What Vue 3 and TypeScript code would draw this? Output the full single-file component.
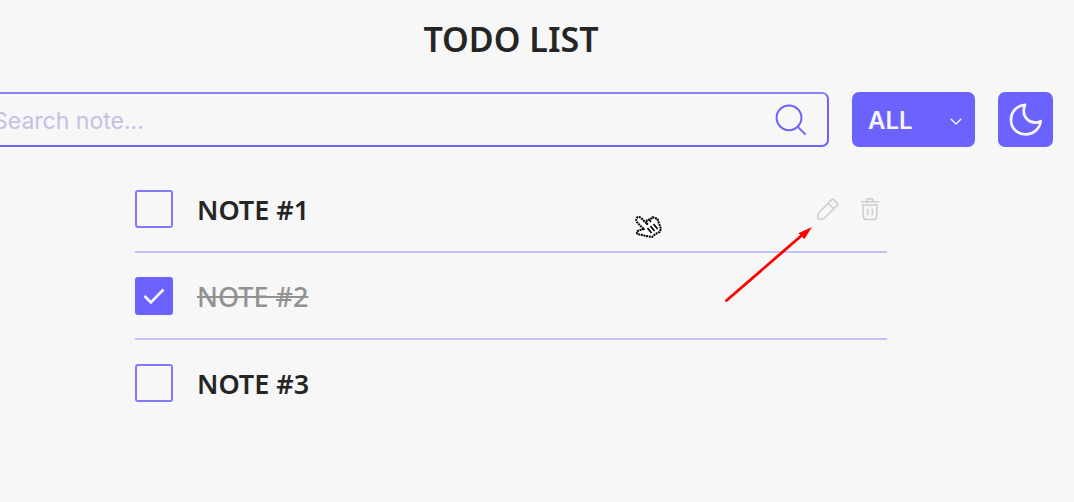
<script setup lang="ts">
import { computed, ref } from 'vue'

interface Note {
  id: number
  title: string
  done: boolean
}

const query = ref('')
const filter = ref('ALL')
const hovered = ref(1)
const notes = ref<Note[]>([
  { id: 1, title: 'NOTE #1', done: false },
  { id: 2, title: 'NOTE #2', done: true },
  { id: 3, title: 'NOTE #3', done: false },
])

const visibleNotes = computed(() =>
  notes.value.filter((note) => {
    const matches = note.title.toLowerCase().includes(query.value.toLowerCase())
    if (filter.value === 'COMPLETE') return matches && note.done
    if (filter.value === 'INCOMPLETE') return matches && !note.done
    return matches
  }),
)

function remove(id: number) {
  notes.value = notes.value.filter((note) => note.id !== id)
}
</script>

<template>
  <main class="page">
    <h1 class="title">TODO LIST</h1>

    <div class="toolbar">
      <div class="search">
        <input v-model="query" class="search-input" type="text" placeholder="Search note..." aria-label="Search note" />
        <button class="search-button" type="button" aria-label="Search">
          <svg width="32" height="32" viewBox="0 0 32 32" fill="none" stroke="currentColor" stroke-width="2">
            <circle cx="14" cy="13.8" r="12.4" />
            <path d="M22.6 22.6l8 8" />
          </svg>
        </button>
      </div>

      <div class="filter">
        <select v-model="filter" class="filter-select" aria-label="Filter notes">
          <option>ALL</option>
          <option>COMPLETE</option>
          <option>INCOMPLETE</option>
        </select>
        <svg class="chevron" width="12" height="8" viewBox="0 0 12 8" fill="none" stroke="currentColor" stroke-width="1.4">
          <path d="M1.2 1.2L6 6l4.8-4.8" stroke-linecap="round" stroke-linejoin="round" />
        </svg>
      </div>

      <button class="theme" type="button" aria-label="Toggle theme">
        <svg width="33" height="33" viewBox="0 0 33 33" fill="none" stroke="currentColor" stroke-width="2.7">
          <path
            d="M16 1.800C8 2.400 2 8.700 2 16.900 2 25.200 8.400 31.300 16.600 31.300c7.800 0 14.200-5.400 15-13.200-1.700 1-3.400 1.500-5.300 1.500-6.400 0-11.600-5.100-11.600-11.500 0-2.300.4-4.400 1.300-6.300z"
            stroke-linejoin="round"
          />
        </svg>
      </button>
    </div>

    <ul class="notes">
      <li v-for="note in visibleNotes" :key="note.id" class="note" @mouseenter="hovered = note.id">
        <label class="note-label">
          <input v-model="note.done" class="box" type="checkbox" />
          <svg v-if="note.done" class="tick" width="22" height="18" viewBox="0 0 22 18" fill="none" stroke="currentColor" stroke-width="2.6">
            <path d="M1.500 9l6.300 6.300L20.500 2.500" />
          </svg>
          <span class="note-text" :class="{ done: note.done }">{{ note.title }}</span>
        </label>
        <div v-if="hovered === note.id" class="actions">
          <button class="action" type="button" aria-label="Edit note">
            <svg width="22" height="22" viewBox="0 0 22 22" fill="none" stroke="currentColor" stroke-width="1.500" stroke-linejoin="round">
              <path d="M1 21v-5.500L14.500 1.900q1.200-1.200 2.400 0l3.200 3.200q1.200 1.200 0 2.400L6.500 21zM11.200 5.200l5.600 5.600" />
            </svg>
          </button>
          <button class="action" type="button" aria-label="Delete note" @click="remove(note.id)">
            <svg width="20" height="24" viewBox="0 0 20 24" fill="none" stroke="currentColor" stroke-width="1.500" stroke-linecap="round" stroke-linejoin="round">
              <path d="M1.500 4.700h17M6.700 4.500V2.600q0-.9.900-.9h4.400q.9 0 .9.900v1.900" />
              <path d="M2.700 8h14.600l-.8 12q-.2 2.500-2.700 2.500H6.200q-2.500 0-2.700-2.500zM7.700 12.200v5.600M12.300 12.200v5.600" />
            </svg>
          </button>
        </div>
      </li>
    </ul>

    <svg class="pointer" width="28" height="24" viewBox="0 0 28 24" aria-hidden="true">
      <path
        d="M8.500 14L1.800 7Q.5 4 2.200 2.500 4.500 1 6.300 3.300L11.300 8 12 5.200 15.500 4 17.500 2.200 20 3 22.500 4l1.500 4.500L26 14l-1.500 3-4 2-3.500 3-7-1.300-7.500-1.700Q1 17 3 15.800z"
        fill="#fff"
        stroke="#000"
        stroke-width="2"
        stroke-dasharray="2 0.700"
      />
      <path d="M12.500 13l4 5M15.500 11l4 5M18.500 9l4 5M11.300 8l1.700 1.500M14.500 5l1.500 2" fill="none" stroke="#000" stroke-width="1.700" />
    </svg>

    <svg class="arrow" width="90" height="77" viewBox="0 0 90 77" aria-hidden="true">
      <path d="M2.500 74.500L77 10" fill="none" stroke="#f00" stroke-width="2.800" stroke-linecap="round" />
      <path d="M88 1L80.300 13.300 78 10.500 76.500 9 74.300 7.200z" fill="#f00" />
    </svg>
  </main>
</template>

<style>
body {
  margin: 0;
  background: #f7f7f7;
  overflow-x: hidden;
}
</style>

<style scoped>
.page {
  position: relative;
  margin: 0 21px 0 -31px;
  padding-top: 15px;
  color: #252525;
  font-family: "Noto Sans", sans-serif;
}

.title {
  margin: 0 0 29px;
  font-size: 34px;
  font-weight: 600;
  line-height: 48px;
  text-align: center;
}

.toolbar {
  display: flex;
  gap: 23px;
}

.search {
  box-sizing: border-box;
  display: flex;
  flex: 1;
  align-items: center;
  height: 55px;
  padding: 0 20px;
  border: 2px solid #6c63ff;
  border-top-color: #8982ff;
  border-radius: 7px;
}

.search-input {
  flex: 1;
  min-width: 0;
  padding: 2px 0 0 2px;
  border: 0;
  outline: 0;
  background: transparent;
  color: #252525;
  font: 400 23px/32px Inter, sans-serif;
}

.search-input::placeholder {
  color: #c3c1e5;
  opacity: 1;
}

button {
  display: flex;
  align-items: center;
  justify-content: center;
  padding: 0;
  border: 0;
  background: transparent;
  cursor: pointer;
}

.search-button {
  color: #6c63ff;
}

.filter {
  position: relative;
  width: 123px;
  color: #f7f7f7;
}

.filter-select {
  width: 100%;
  height: 55px;
  padding: 2px 36px 0 16px;
  border: 0;
  border-radius: 7px;
  appearance: none;
  background: #6c63ff;
  color: inherit;
  font: 600 24px/32px Inter, sans-serif;
}

.chevron {
  position: absolute;
  top: 26px;
  right: 13px;
  pointer-events: none;
}

.theme {
  width: 55px;
  height: 55px;
  border-radius: 7px;
  background: #6c63ff;
  color: #f7f7f7;
}

.notes {
  max-width: 752px;
  margin: 19px auto 0;
  padding: 0;
  list-style: none;
}

.note {
  display: flex;
  align-items: center;
  justify-content: space-between;
  padding: 24px 7px 23px 0;
}

.note:not(:last-child) {
  border-bottom: 2px solid #c4c0ff;
}

.note-label {
  position: relative;
  display: flex;
  align-items: center;
  gap: 24px;
}

.box {
  flex: none;
  width: 38px;
  height: 38px;
  margin: 0;
  border: 2px solid #8079ff;
  border-radius: 3px;
  appearance: none;
}

.box:checked {
  border-color: #6c63ff;
  background: #6c63ff;
}

.tick {
  position: absolute;
  top: 10px;
  left: 8px;
  color: #f7f7f7;
  pointer-events: none;
}

.note-text {
  padding-top: 2px;
  font-size: 27px;
  font-weight: 600;
  line-height: 36px;
}

.note-text.done {
  color: #929292;
  font-weight: 500;
  text-decoration: line-through;
  text-decoration-thickness: 2px;
}

.actions {
  display: flex;
  align-items: center;
  gap: 21px;
}

.action {
  color: #cdcdcd;
}

.pointer {
  position: absolute;
  top: 215px;
  left: 666px;
}

.arrow {
  position: absolute;
  top: 226px;
  left: 755px;
  pointer-events: none;
}
</style>
